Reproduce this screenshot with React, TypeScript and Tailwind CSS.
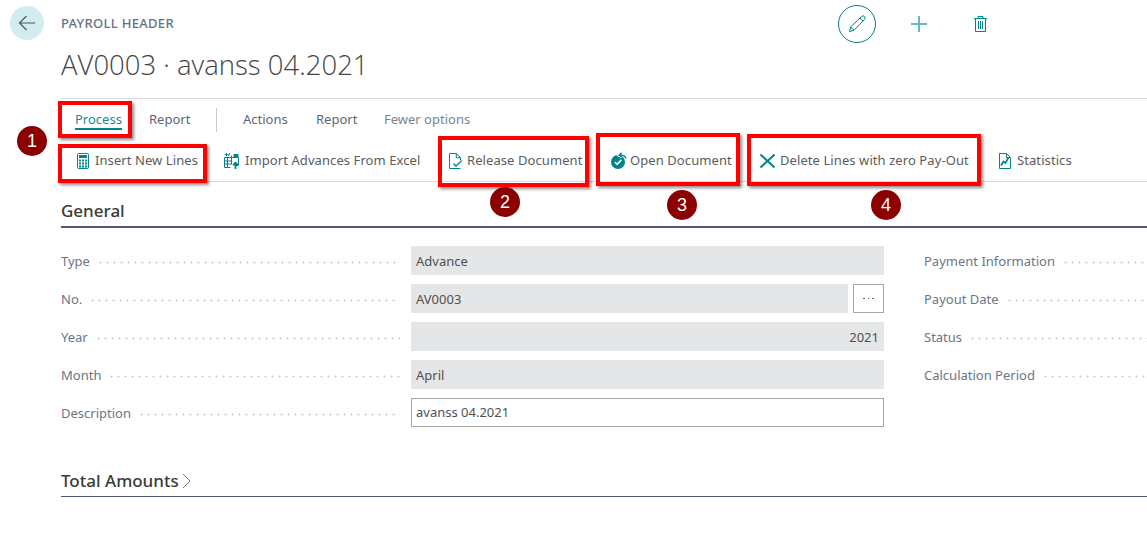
import type { ReactNode } from "react";

const TEAL = "#00838a";

function Calculator() {
  return (
    <svg className="shrink-0" width="12" height="16" viewBox="0 0 12 16" fill="none" stroke={TEAL}>
      <rect x="0.500" y="0.500" width="11" height="15" rx="1" />
      <rect x="2" y="2" width="8" height="3" fill={TEAL} stroke="none" />
      <g fill={TEAL} stroke="none">
        <rect x="2" y="6.500" width="2" height="2" />
        <rect x="5" y="6.500" width="2" height="2" />
        <rect x="8" y="6.500" width="2" height="2" />
        <rect x="2" y="9.500" width="2" height="2" />
        <rect x="5" y="9.500" width="2" height="2" />
        <rect x="8" y="9.500" width="2" height="2" />
        <rect x="2" y="12.500" width="2" height="2" />
        <rect x="5" y="12.500" width="2" height="2" />
        <rect x="8" y="12.500" width="2" height="2" />
      </g>
    </svg>
  );
}

function ImportIcon() {
  return (
    <svg className="shrink-0" width="15" height="16" viewBox="0 0 15 16" fill="none" stroke={TEAL}>
      <path d="M0.500 4.500h14v8h-4M0.500 4.500v10h6M0.500 8h7M0.500 11h7M3.500 4.500v10M7.500 2.500v9" />
      <path d="M2.500 0v3.500M0.500 1.700h4M6 0L4.500 3" />
      <path d="M9.500 1h5v3.500h-5z" fill={TEAL} stroke="none" />
      <path d="M11.500 16v-6M9 12.200l2.500-2.500 2.500 2.500" strokeWidth="1.800" />
    </svg>
  );
}

function ReleaseIcon() {
  return (
    <svg className="shrink-0" width="14" height="16" viewBox="0 0 14 16" fill="none" stroke={TEAL}>
      <path d="M11.500 15.500H0.500V0.500h6.800l4.200 4.200v2.300M7.300 0.500v4.200h4.200" />
      <path d="M4.500 10.500l2.500 2.500 5.800-5.500" stroke="#1f93a6" strokeWidth="1.700" />
    </svg>
  );
}

function OpenIcon() {
  return (
    <svg className="shrink-0" width="16" height="17" viewBox="0 0 16 17" fill="none">
      <circle cx="7" cy="10" r="7" fill={TEAL} />
      <path d="M3.800 10l2.400 2.400 4.200-4.600" stroke="#fff" strokeWidth="1.600" />
      <path d="M9 3.500a4.500 4.500 0 0 1 6 3M10.500 0.700L8.200 3.500l3 1.300" stroke="#fff" strokeWidth="3" />
      <path d="M9 3.500a4.500 4.500 0 0 1 6 3M10.500 0.700L8.200 3.500l3 1.300" stroke={TEAL} strokeWidth="1.400" />
    </svg>
  );
}

function DeleteIcon() {
  return (
    <svg className="shrink-0" width="15" height="14" viewBox="0 0 15 14" fill="none" stroke={TEAL} strokeWidth="2">
      <path d="M0.500 0.500l14 13M14.500 0.500L0.500 13.500" />
    </svg>
  );
}

function StatsIcon() {
  return (
    <svg className="shrink-0" width="12" height="16" viewBox="0 0 12 16" fill="none" stroke={TEAL}>
      <path d="M0.500 15.500V0.500h7l4 4v11z" />
      <path d="M7.500 0.500v4h4" />
      <path d="M2 12.500l2.500-4 2 1.500 3-5.500" strokeWidth="1.700" />
    </svg>
  );
}

function Dots() {
  return <span className="flex-1 h-[3px] mt-[2px] bg-[radial-gradient(circle,#c4c8ce_0.9px,transparent_1.1px)] bg-[length:7px_3px] bg-repeat-x" />;
}

function Field({ label, children }: { label: string; children: ReactNode }) {
  return (
    <div className="flex items-center h-[29px] mb-[9px]">
      <div className="w-[350px] pr-[11px] pt-[2px] flex items-center gap-[7px] shrink-0">
        <span className="text-[13px] text-[#6b7685] whitespace-nowrap">{label}</span>
        <Dots />
      </div>
      {children}
    </div>
  );
}

function ReadOnly({ text, right }: { text: string; right?: boolean }) {
  return (
    <div className={`flex-1 h-[29px] px-[5px] pt-[2px] flex items-center bg-[#e5e6e8] text-[13px] text-[#505050] ${right ? "justify-end" : ""}`}>
      {text}
    </div>
  );
}

function RightLabel({ label }: { label: string }) {
  return (
    <div className="flex items-center h-[29px] mb-[9px] pt-[2px] gap-[7px]">
      <span className="text-[13px] text-[#6b7685] whitespace-nowrap">{label}</span>
      <Dots />
    </div>
  );
}

function Action({ icon, label, width, gap }: { icon: ReactNode; label: string; width: string; gap: string }) {
  return (
    <div className={`flex items-center ${width} text-[13px] text-[#5c5c5c] tracking-[0.08px] whitespace-nowrap`}>
      {icon}
      <span className={gap}>{label}</span>
    </div>
  );
}

export default function App() {
  return (
    <div className="relative w-[1147px] h-[535px] overflow-hidden bg-white font-['Noto_Sans',sans-serif]">
      <div className="flex h-[98px]">
        <div className="w-[61px] shrink-0 pl-[10px] pt-[6px]">
          <div className="w-[34px] h-[34px] rounded-full bg-[#d2ecef] flex items-center justify-center">
            <svg width="18" height="16" viewBox="0 0 18 16" fill="none" stroke="#4a5560" strokeWidth="1.100">
              <path d="M17 8H1.500M8.500 1L1.500 8l7 7" />
            </svg>
          </div>
        </div>
        <div className="flex-1 relative">
          <div className="pt-[15px] text-[13px] leading-[17px] font-medium text-[#667182] tracking-[0.3px]">PAYROLL HEADER</div>
          <div className="mt-[15px] text-[27.500px] leading-[36px] font-light font-['Open_Sans',sans-serif] text-[#444]">AV0003 · avanss 04.2021</div>
          <div className="absolute left-[777px] top-[5px] flex items-center">
            <div className="w-[38px] h-[38px] rounded-full border border-[#00838a] flex items-center justify-center">
              <svg width="18" height="18" viewBox="0 0 18 18" fill="none" stroke={TEAL}>
                <path d="M1.500 16.500l1.200-4.500L13.500 1.500a1.800 1.800 0 0 1 3 3L6 15.300zM2.700 12l3.300 3.300M12 3l3 3" />
              </svg>
            </div>
            <svg className="ml-[35px]" width="16" height="16" viewBox="0 0 16 16" stroke="#6bb8bb" strokeWidth="2">
              <path d="M8 0v16M0 8h16" />
            </svg>
            <svg className="ml-[47px]" width="13" height="16" viewBox="0 0 13 16" fill="none" stroke={TEAL}>
              <path d="M0 2.500h13M4 2.500v-2h5v2M1.500 2.500v13h10v-13M4.500 5v8M6.500 5v8M8.500 5v8" />
            </svg>
          </div>
        </div>
      </div>

      <div className="ml-[61px] border-t border-b border-[#d8dae0] h-[84px]">
        <div className="flex items-center h-[40px] pl-[14px] pt-[2px] text-[13px] text-[#5c6778]">
          <div className="relative w-[74px] text-[#1b8a90]">
            Process
            <div className="absolute left-0 top-[18px] w-[47px] h-[2px] bg-[#00838a]" />
          </div>
          <div className="w-[67px]">Report</div>
          <div className="w-px h-[24px] bg-[#c8ccd2] mr-[26px]" />
          <div className="w-[73px]">Actions</div>
          <div className="w-[68px]">Report</div>
          <div className="text-[#7a8592]">Fewer options</div>
        </div>
        <div className="flex items-center h-[42px] pl-[16px] pt-[1px]">
          <Action icon={<Calculator />} label="Insert New Lines" width="w-[147px]" gap="ml-[6px]" />
          <Action icon={<ImportIcon />} label="Import Advances From Excel" width="w-[225px]" gap="ml-[6px]" />
          <Action icon={<ReleaseIcon />} label="Release Document" width="w-[162px]" gap="ml-[4px]" />
          <Action icon={<OpenIcon />} label="Open Document" width="w-[149px]" gap="ml-[3px]" />
          <Action icon={<DeleteIcon />} label="Delete Lines with zero Pay-Out" width="w-[239px]" gap="ml-[5px]" />
          <Action icon={<StatsIcon />} label="Statistics" width="w-[100px]" gap="ml-[6px]" />
        </div>
      </div>

      <div className="ml-[61px] mt-[16px] text-[17px] leading-[26px] font-medium text-[#3a3a3a] border-b-2 border-[#505c6d] h-[30px]">General</div>

      <div className="ml-[61px] mt-[18px] flex">
        <div className="w-[823px] shrink-0">
          <Field label="Type"><ReadOnly text="Advance" /></Field>
          <Field label="No.">
            <ReadOnly text="AV0003" />
            <div className="ml-[5px] w-[31px] h-[29px] border border-[#a6a6a6] flex items-center justify-center gap-[3px]">
              <span className="w-[1.500px] h-[1.500px] bg-[#666]" />
              <span className="w-[1.500px] h-[1.500px] bg-[#666]" />
              <span className="w-[1.500px] h-[1.500px] bg-[#666]" />
            </div>
          </Field>
          <Field label="Year"><ReadOnly text="2021" right /></Field>
          <Field label="Month"><ReadOnly text="April" /></Field>
          <Field label="Description">
            <div className="flex-1 h-[29px] px-[4px] pt-[1px] border border-[#a6a6a6] flex items-center text-[13px] text-[#505050]">avanss 04.2021</div>
          </Field>
        </div>
        <div className="flex-1 ml-[40px]">
          <RightLabel label="Payment Information" />
          <RightLabel label="Payout Date" />
          <RightLabel label="Status" />
          <RightLabel label="Calculation Period" />
        </div>
      </div>

      <div className="ml-[61px] mt-[28px] h-[33px] pt-[2px] border-b border-[#505c6d] flex items-center text-[17px] font-medium text-[#3a3a3a]">
        Total Amounts
        <svg className="ml-[3px]" width="9" height="16" viewBox="0 0 9 16" fill="none" stroke="#777">
          <path d="M1 1l7 7-7 7" />
        </svg>
      </div>

      {/* red annotation boxes */}
      <div className="absolute left-[58px] top-[101px] w-[74px] h-[37px] border-4 border-[#f00] shadow-[2px_2px_3px_rgba(0,0,0,0.45)]" />
      <div className="absolute left-[58px] top-[144px] w-[149px] h-[39px] border-4 border-[#f00] shadow-[2px_2px_3px_rgba(0,0,0,0.45)]" />
      <div className="absolute left-[438px] top-[136px] w-[151px] h-[51px] border-4 border-[#f00] shadow-[2px_2px_3px_rgba(0,0,0,0.45)]" />
      <div className="absolute left-[596px] top-[133px] w-[144px] h-[53px] border-4 border-[#f00] shadow-[2px_2px_3px_rgba(0,0,0,0.45)]" />
      <div className="absolute left-[747px] top-[134px] w-[234px] h-[52px] border-4 border-[#f00] shadow-[2px_2px_3px_rgba(0,0,0,0.45)]" />

      {/* numbered markers */}
      <div className="absolute left-[17px] top-[126px] w-[30px] h-[30px] rounded-full bg-[#8b0000] text-white text-[18px] font-['Liberation_Sans',sans-serif] flex items-center justify-center">1</div>
      <div className="absolute left-[490px] top-[187px] w-[30px] h-[30px] rounded-full bg-[#8b0000] text-white text-[18px] font-['Liberation_Sans',sans-serif] flex items-center justify-center">2</div>
      <div className="absolute left-[667px] top-[190px] w-[30px] h-[30px] rounded-full bg-[#8b0000] text-white text-[18px] font-['Liberation_Sans',sans-serif] flex items-center justify-center">3</div>
      <div className="absolute left-[871px] top-[190px] w-[30px] h-[30px] rounded-full bg-[#8b0000] text-white text-[18px] font-['Liberation_Sans',sans-serif] flex items-center justify-center">4</div>
    </div>
  );
}
